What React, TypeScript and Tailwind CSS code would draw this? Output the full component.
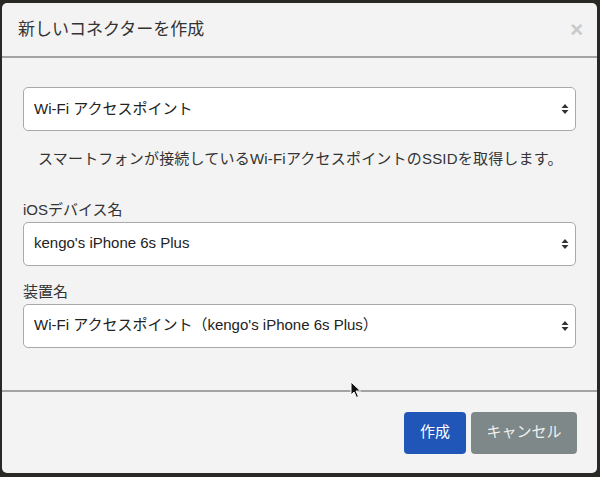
import React from 'react';

const font = { fontFamily: '"Liberation Sans", "Noto Sans CJK JP", sans-serif' };

const Arrows = () => (
  <svg width="8" height="12" viewBox="0 0 8 12" className="shrink-0">
    <path d="M4 1 L7.5 5 L0.5 5 Z" fill="#333" />
    <path d="M4 11 L7.5 7 L0.5 7 Z" fill="#333" />
  </svg>
);

const SelectBox = ({ value }: { value: string }) => (
  <div className="h-[44px] bg-white border border-[#a9a9a9] rounded-[5px] flex items-center justify-between pl-[10px] pr-[6px] text-[15px] text-[#222]">
    <span>{value}</span>
    <Arrows />
  </div>
);

export default function App() {
  return (
    <div className="w-[600px] h-[477px] bg-[#2a2824] pt-[3px] pl-[2px] pr-[3px] pb-[4px]" style={font}>
      <div className="relative h-full bg-[#f3f3f3] rounded-[5px] flex flex-col">
        <div className="h-[55px] flex items-center justify-between pl-[16px] pr-[14px] border-b-2 border-[#a3a3a3] shrink-0">
          <h1 className="text-[17px] text-[#333]">新しいコネクターを作成</h1>
          <span className="text-[22px] font-bold text-[#c9c9c9] leading-none">×</span>
        </div>
        <div className="flex-1 px-[21px] pt-[29px] border-b-2 border-[#a3a3a3]">
          <SelectBox value="Wi-Fi アクセスポイント" />
          <p className="pl-[15px] mt-[17px] text-[15px] text-[#333] tracking-[0.2px]">
            スマートフォンが接続しているWi-FiアクセスポイントのSSIDを取得します。
          </p>
          <div className="mt-[29px] text-[15px] text-[#333] leading-[20px] mb-[2px]">iOSデバイス名</div>
          <SelectBox value="kengo's iPhone 6s Plus" />
          <div className="mt-[16px] text-[15px] text-[#333] leading-[20px] mb-[2px]">装置名</div>
          <SelectBox value="Wi-Fi アクセスポイント（kengo's iPhone 6s Plus）" />
        </div>
        <div className="h-[81px] shrink-0 flex items-center justify-end gap-[5px] pr-[20px]">
          <button className="h-[42px] w-[62px] rounded-[4px] bg-[#1f56b8] text-white text-[15px]">作成</button>
          <button className="h-[42px] w-[106px] rounded-[4px] bg-[#7e8888] text-[#f0f0f0] text-[15px]">キャンセル</button>
        </div>
        <svg className="absolute left-[348px] top-[378px]" width="12" height="18" viewBox="0 0 12 18">
          <path d="M1 1 L1 14 L4 11 L6.5 16.5 L8.5 15.5 L6 10 L10.5 10 Z" fill="#111" stroke="#fff" strokeWidth="1" />
        </svg>
      </div>
    </div>
  );
}
